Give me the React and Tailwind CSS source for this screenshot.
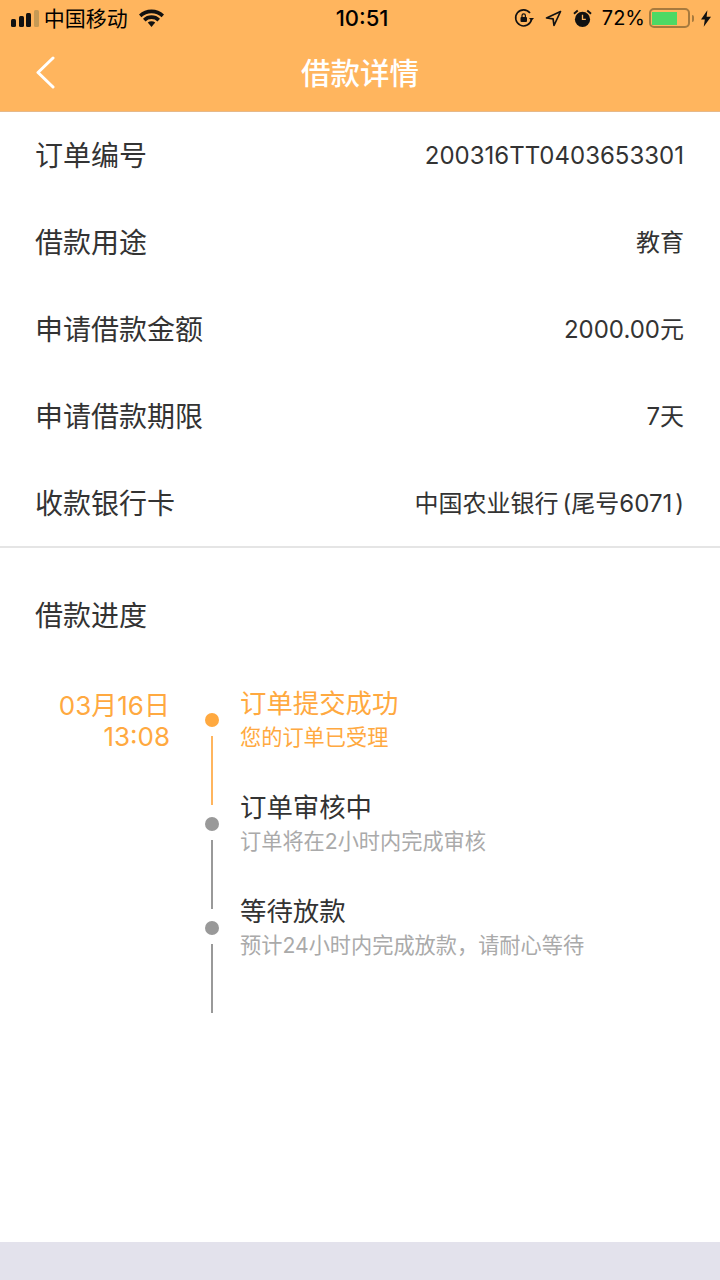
const font = { fontFamily: 'Inter, "Noto Sans CJK SC", sans-serif' }

const rows = [
  ['订单编号', '200316TT0403653301'],
  ['借款用途', '教育'],
  ['申请借款金额', '2000.00元'],
  ['申请借款期限', '7天'],
  ['收款银行卡', <>中国农业银行<span className="ml-[4px]">(</span>尾号6071<span className="ml-[3px]">)</span></>],
]

const steps = [
  { title: '订单提交成功', sub: '您的订单已受理', active: true },
  { title: '订单审核中', sub: '订单将在2小时内完成审核' },
  { title: '等待放款', sub: '预计24小时内完成放款，请耐心等待' },
]

function StatusBar() {
  return (
    <div className="h-9 flex items-center justify-between pl-[11px] pr-[9px] text-black">
      <div className="flex items-center w-[200px]">
        <div className="flex items-end gap-[2.6px]">
          <div className="w-[5px] h-[8px] rounded-[1.5px] bg-[#111]" />
          <div className="w-[5px] h-[11px] rounded-[1.5px] bg-[#111]" />
          <div className="w-[5px] h-[14px] rounded-[1.5px] bg-[#111]" />
          <div className="w-[5px] h-[17px] rounded-[1.5px] bg-[#c69a55]" />
        </div>
        <span className="ml-[5px] text-[21px] leading-none">中国移动</span>
        <svg className="ml-[11px]" width="25" height="18" viewBox="0 0 25 18">
          <path d="M12.5 18 8.8 13.6a5.4 5.4 0 0 1 7.4 0z" fill="#111" />
          <path d="M0 5.6a18 18 0 0 1 25 0l-2.4 2.7a14.6 14.6 0 0 0-20.2 0z" fill="#111" />
          <path d="M4 9.8a12.2 12.2 0 0 1 17 0l-2.5 2.7a8.6 8.6 0 0 0-12 0z" fill="#111" />
        </svg>
      </div>
      <span className="text-[22px] font-medium leading-none ml-[2px]">10:51</span>
      <div className="flex items-center justify-end w-[200px]">
        <svg width="20" height="20" viewBox="0 0 20 20" fill="none">
          <path d="M17.5 11.5A8 8 0 1 1 16 5" stroke="#111" strokeWidth="1.6" />
          <path d="M15 10h5l-2.5 3z" fill="#111" />
          <rect x="6.5" y="9" width="6.5" height="5" rx="1" fill="#111" />
          <path d="M8 9V7.5a1.7 1.7 0 0 1 3.4 0V9" stroke="#111" strokeWidth="1.2" />
        </svg>
        <svg className="ml-[11px]" width="17" height="17" viewBox="0 0 17 17" fill="none">
          <path d="M15.5 1.5 1.5 8l6.6.9.9 6.6z" stroke="#111" strokeWidth="1.7" strokeLinejoin="round" />
        </svg>
        <svg className="ml-[11px]" width="19" height="19" viewBox="0 0 20 20">
          <circle cx="10" cy="11" r="8" fill="#111" />
          <path d="M10 6v5h3.5" stroke="#ffb55e" strokeWidth="1.4" fill="none" />
          <path d="M1 5 5 1.5M19 5l-4-3.5" stroke="#111" strokeWidth="2" />
        </svg>
        <span className="ml-[10px] text-[20px] leading-none">72%</span>
        <div className="ml-[4px] w-[41px] h-[20px] rounded-[5px] border-2 border-[#a77a3e] p-[1.5px]">
          <div className="w-[25px] h-full bg-[#4cd964]" />
        </div>
        <div className="ml-[2px] w-[2px] h-[7px] rounded-r-sm bg-[#a77a3e]" />
        <svg className="ml-[7px]" width="10" height="17" viewBox="0 0 11 18">
          <path d="M7 0 0 10h4.2L3 18l8-11H6.2z" fill="#111" />
        </svg>
      </div>
    </div>
  )
}

export default function App() {
  return (
    <div style={font} className="w-[720px] h-[1280px] flex flex-col bg-white overflow-hidden">
      <div className="h-[112px] shrink-0 bg-[#ffb55e] border-b border-[#e6b98a]">
        <StatusBar />
        <div className="h-[75px] relative flex items-center justify-center">
          <svg className="absolute left-[34px] top-[19px]" width="22" height="34" viewBox="0 0 22 34" fill="none">
            <path d="M19 3 4 17.5 19 32" stroke="#fff" strokeWidth="3" strokeLinecap="round" strokeLinejoin="round" />
          </svg>
          <h1 className="text-[29.5px] font-medium text-white leading-none">借款详情</h1>
        </div>
      </div>

      <div className="h-[436px] shrink-0 border-b-2 border-[#e5e5e5]">
        {rows.map(([label, value]) => (
          <div key={label} className="h-[87px] flex items-center justify-between pl-[35px] pr-9">
            <span className="text-[28px] leading-none text-[#333]">{label}</span>
            <span className="text-[24px] leading-none text-[#333]">{value}</span>
          </div>
        ))}
      </div>

      <div className="flex-1">
        <div className="pl-[35px] pt-[54px] text-[28px] leading-none text-[#333]">借款进度</div>
        <div className="flex mt-[61px]">
          <div className="w-[170px] -mt-[1px] shrink-0 text-right text-[26px] leading-[31px] text-[#ffa940]">
            <div>03月16日</div>
            <div>13:08</div>
          </div>
          <div className="ml-[35px] flex flex-col">
            {steps.map(s => (
              <div key={s.title} className="h-[104px] flex">
                <div className="w-[14px] shrink-0 flex flex-col items-center pt-[22px]">
                  <div className={`w-[14px] h-[14px] shrink-0 rounded-full ${s.active ? 'bg-[#ffa940]' : 'bg-[#999]'}`} />
                  <div className={`w-[2px] h-[69px] shrink-0 mt-[9px] ${s.active ? 'bg-[#ffb55e]' : 'bg-[#999]'}`} />
                </div>
                <div className="ml-[21px] -mt-[1px]">
                  <div className={`text-[26.4px] leading-none ${s.active ? 'text-[#ffa940]' : 'text-[#333]'}`}>{s.title}</div>
                  <div className={`mt-[11px] text-[21.2px] leading-none ${s.active ? 'text-[#ffa940]' : 'text-[#aaa]'}`}>{s.sub}</div>
                </div>
              </div>
            ))}
          </div>
        </div>
      </div>

      <div className="h-[38px] shrink-0 bg-[#e3e2ec]" />
    </div>
  )
}
